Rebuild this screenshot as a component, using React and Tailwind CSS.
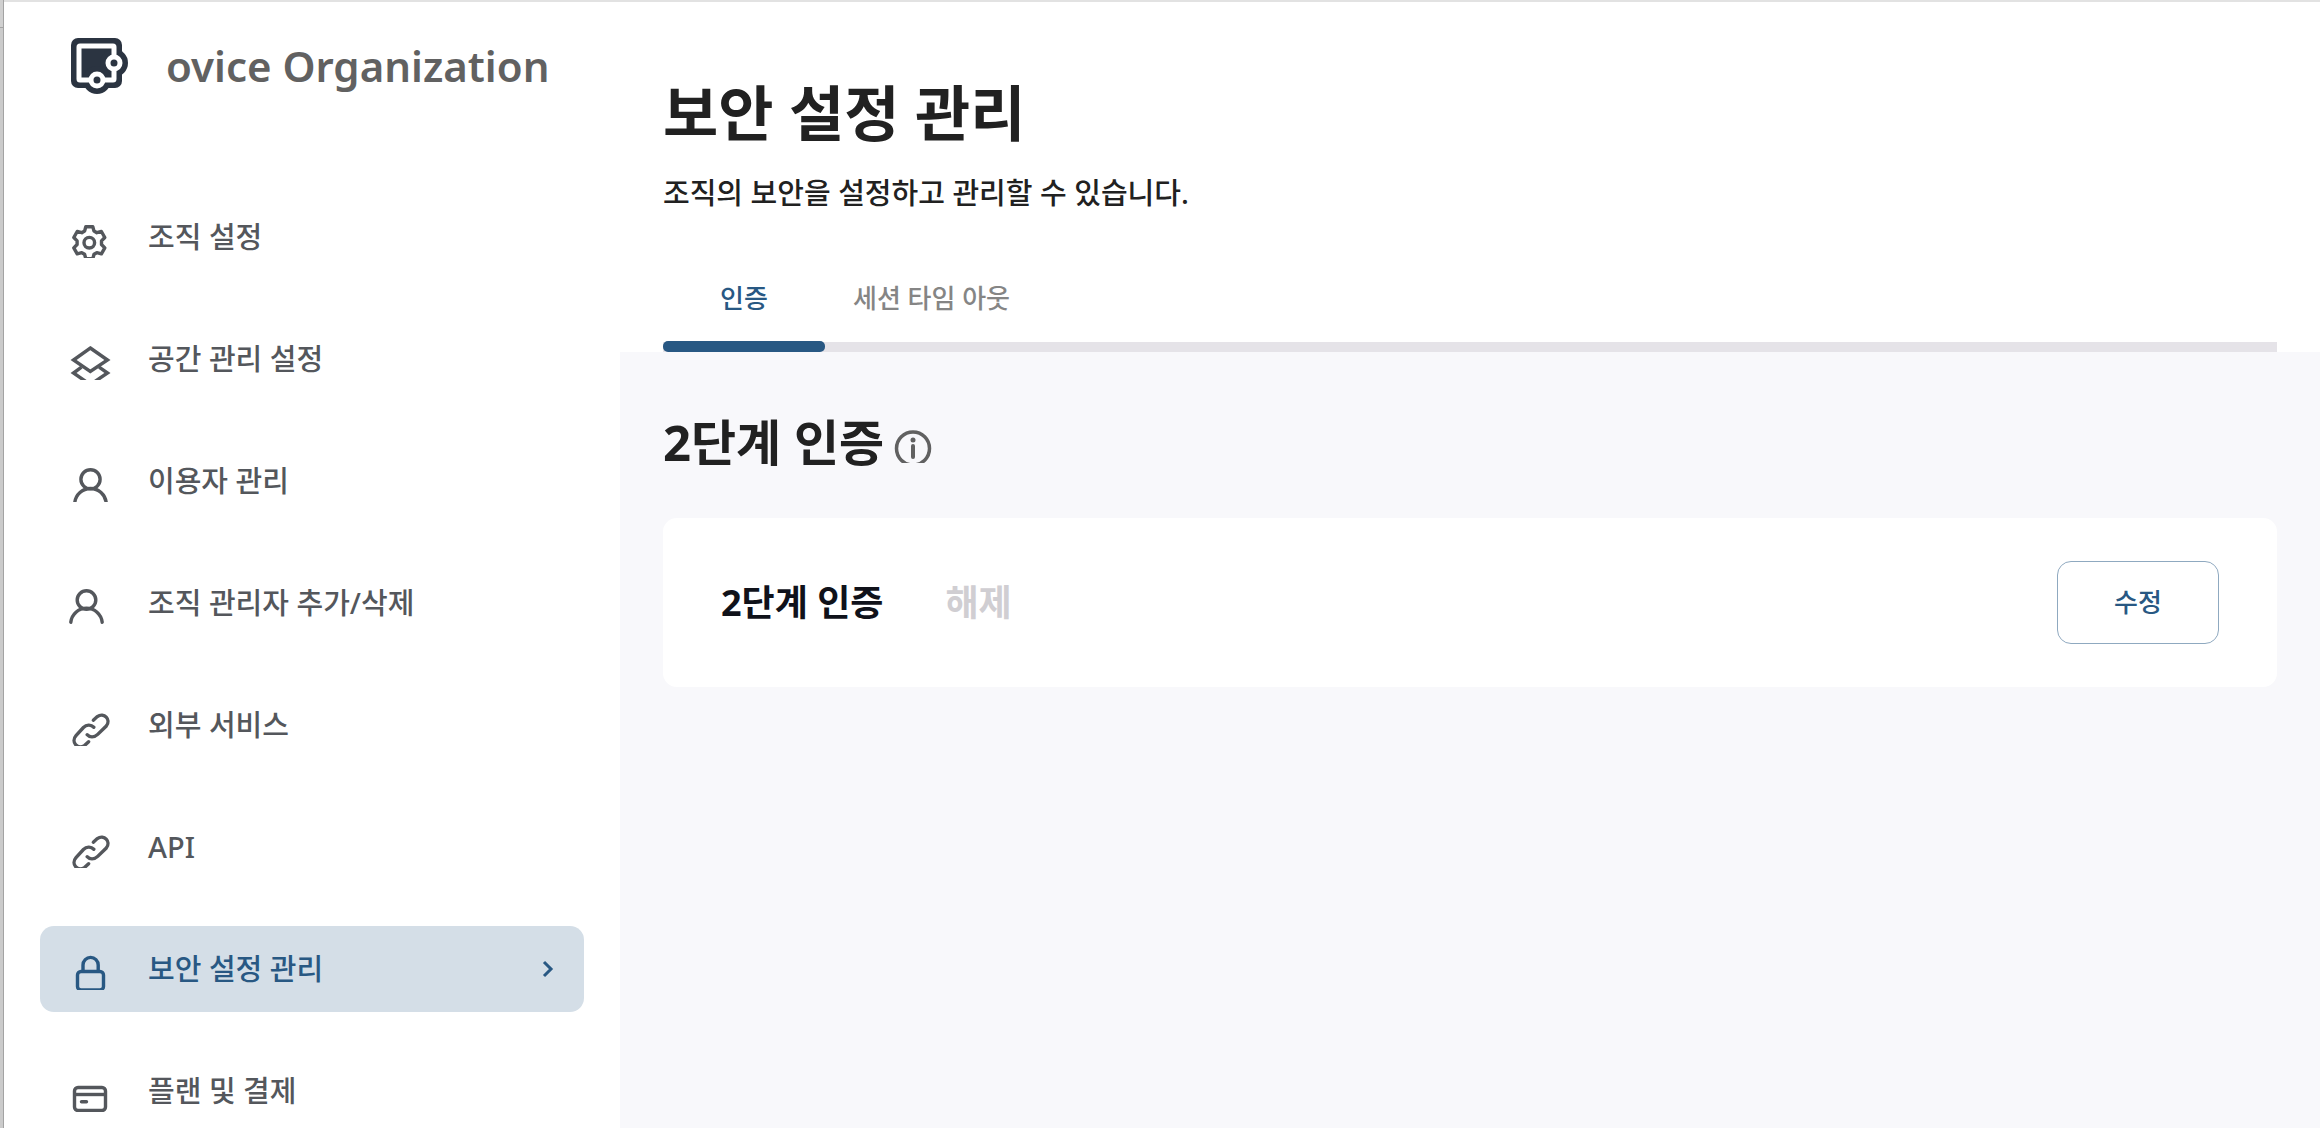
const navItems = [
  { name: "조직 설정", icon: <GearIcon /> },
  { name: "공간 관리 설정", icon: <LayersIcon /> },
  { name: "이용자 관리", icon: <UserIcon /> },
  { name: "조직 관리자 추가/삭제", icon: <AdminIcon /> },
  { name: "외부 서비스", icon: <LinkIcon /> },
  { name: "API", icon: <LinkIcon /> },
  { name: "보안 설정 관리", icon: <LockIcon />, active: true },
  { name: "플랜 및 결제", icon: <CardIcon /> },
];

const tabs = [
  { name: "인증", active: true },
  { name: "세션 타임 아웃", active: false },
];

function NavSvg({ children }) {
  return (
    <svg
      viewBox="0 0 48 42"
      className="h-[42px] w-12 shrink-0 overflow-hidden"
      fill="none"
      stroke="currentColor"
      strokeWidth="3.4"
      aria-hidden="true"
    >
      {children}
    </svg>
  );
}

function GearIcon() {
  return (
    <NavSvg>
      <circle cx="25.3" cy="26.7" r="5.3" />
      <path
        strokeLinejoin="round"
        d="M21.8 10.7h7l1.2 4.4 2.8 1.6 4.6-1.2 3.4 6-3.3 3.4v3.6l3.3 3.4-3.4 6-4.6-1.2-2.8 1.6-1.2 4.4h-7l-1.2-4.4-2.8-1.6-4.6 1.2-3.4-6 3.3-3.4v-3.6l-3.3-3.4 3.4-6 4.6 1.2 2.8-1.6z"
      />
    </NavSvg>
  );
}

function LayersIcon() {
  return (
    <NavSvg>
      <path d="M26.3 10L43.5 22 26.3 33.4 9.5 22z" />
      <path d="M17.5 29.2L9.5 35l16.8 11.6L43.5 35l-8.4-5.8" />
    </NavSvg>
  );
}

function UserIcon() {
  return (
    <NavSvg>
      <circle cx="26.5" cy="19.3" r="9.6" />
      <path d="M10.8 42.5a15.8 15.8 0 0 1 31.4 0" />
    </NavSvg>
  );
}

function AdminIcon() {
  return (
    <NavSvg>
      <circle cx="22.5" cy="18" r="9.3" />
      <path strokeLinecap="round" d="M6.8 40.2a15.8 15.8 0 0 1 31.4 0" />
    </NavSvg>
  );
}

function LinkIcon() {
  return (
    <NavSvg>
      <g strokeLinecap="round">
        <path d="M29.3 16.2l4-3.6c6.7-4.8 14.1 3 9 9.4l-8.6 8.4c-3.6 3.4-8 3.2-10.6.3" />
        <path d="M29.8 23.2c-2.9-3-7.4-2.6-10.4.3L12 31.7c-5.4 6.2 1.4 14.5 8.8 9.6l3.8-3.6" />
      </g>
    </NavSvg>
  );
}

function LockIcon() {
  return (
    <NavSvg>
      <rect x="13.5" y="23.5" width="26" height="18.5" rx="3.5" />
      <path d="M19 23v-6a7.6 7.6 0 0 1 15.2 0v6" />
    </NavSvg>
  );
}

function CardIcon() {
  return (
    <NavSvg>
      <rect x="10.5" y="17.5" width="31" height="23" rx="3.5" />
      <path d="M10 24.5h32" />
      <path strokeLinecap="round" d="M17.5 31.7h5" />
    </NavSvg>
  );
}

function Logo() {
  return (
    <svg viewBox="0 0 57 56" className="h-14 w-[57px] shrink-0" aria-hidden="true">
      <g fill="#2b3441">
        <rect width="51" height="50" rx="7" />
        <circle cx="43" cy="25" r="14" />
        <circle cx="26" cy="42" r="14" />
      </g>
      <rect x="8" y="8" width="35" height="34" rx="1" fill="none" stroke="#fff" strokeWidth="5" />
      <g fill="#2b3441" stroke="#fff" strokeWidth="5">
        <circle cx="43" cy="25" r="6" />
        <circle cx="26" cy="42" r="6" />
      </g>
    </svg>
  );
}

function InfoIcon() {
  return (
    <svg
      viewBox="0 0 38 33"
      className="h-[33px] w-[38px] overflow-hidden"
      fill="none"
      stroke="#616161"
      aria-hidden="true"
    >
      <circle cx="19" cy="18.5" r="16.5" strokeWidth="3.5" />
      <path d="M19 16v11" strokeWidth="4" strokeLinecap="round" />
      <circle cx="19" cy="10" r="2.5" fill="#616161" stroke="none" />
    </svg>
  );
}

function Sidebar() {
  return (
    <aside className="flex w-[616px] shrink-0 flex-col pt-9">
      <div className="flex items-center gap-[38px] pr-6 pl-[67px]">
        <Logo />
        <span className="text-[42px] leading-[56px] font-semibold text-[#616161]">
          ovice Organization
        </span>
      </div>
      <nav className="mt-[100px] px-9">
        <ul className="flex flex-col gap-9">
          {navItems.map((item) => (
            <li key={item.name}>
              <a
                href="#"
                aria-current={item.active ? "page" : undefined}
                className={`flex h-[86px] items-center rounded-[14px] pr-[30px] pl-6 text-[29px] leading-10 font-medium ${
                  item.active ? "bg-[#d4dee7] text-[#285883]" : "text-[#54575c]"
                }`}
              >
                {item.icon}
                <span className="ml-9 flex-1">{item.name}</span>
                {item.active && (
                  <svg
                    viewBox="0 0 12 18"
                    className="h-[18px] w-3"
                    fill="none"
                    stroke="currentColor"
                    strokeWidth="3"
                    aria-hidden="true"
                  >
                    <path d="M2 2l7 7-7 7" />
                  </svg>
                )}
              </a>
            </li>
          ))}
        </ul>
      </nav>
    </aside>
  );
}

const App = () => {
  return (
    <div className="flex h-screen overflow-hidden bg-white font-['Noto_Sans','Noto_Sans_CJK_KR',sans-serif]">
      {/* Window edge */}
      <div className="w-1 shrink-0 border-r border-[#a3a3a3] bg-[#cbcbcb]">
        <div className="h-7 border-b border-[#a3a3a3] bg-[#d0d0d0]" />
      </div>
      <div className="flex min-w-0 flex-1 border-t-2 border-[#e2e2e2]">
        <Sidebar />

        <main className="flex min-w-0 flex-1 flex-col bg-[#f8f8fb]">
          <header className="bg-white px-[43px] pt-[67px]">
            <h1 className="text-[60px] leading-[88px] font-bold text-[#212121]">보안 설정 관리</h1>
            <p className="mt-4 text-[29px] leading-10 font-medium text-[#212121]">
              조직의 보안을 설정하고 관리할 수 있습니다.
            </p>
            <div className="mt-10 flex border-b-[10px] border-[#e5e3e8]" role="tablist">
              {tabs.map((tab) => (
                <button
                  key={tab.name}
                  type="button"
                  role="tab"
                  aria-selected={tab.active}
                  className={`relative h-[89px] text-[26px] leading-10 font-medium ${
                    tab.active ? "w-[162px] text-[#285883]" : "px-7 text-[#858585]"
                  }`}
                >
                  {tab.name}
                  {tab.active && (
                    <span className="absolute inset-x-0 -bottom-[10px] h-[11px] rounded-[5px] bg-[#285883]" />
                  )}
                </button>
              ))}
            </div>
          </header>

          <section className="px-[43px] pt-[54px]">
            <div className="flex items-center gap-[10px]">
              <h2 className="text-[49px] leading-[72px] font-bold text-[#212121]">2단계 인증</h2>
              <button type="button" aria-label="정보" className="mt-2">
                <InfoIcon />
              </button>
            </div>
            <div className="mt-10 flex items-center rounded-[14px] bg-white px-[58px] py-[43px]">
              <span className="text-4xl font-bold text-[#10121a]">2단계 인증</span>
              <span className="ml-[62px] text-4xl font-bold text-[#d0ced2]">해제</span>
              <button
                type="button"
                className="ml-auto h-[83px] w-[162px] rounded-[14px] border border-[#8fa9c0] text-[26px] font-medium text-[#285883]"
              >
                수정
              </button>
            </div>
          </section>
        </main>
      </div>
    </div>
  );
};

export default App;
